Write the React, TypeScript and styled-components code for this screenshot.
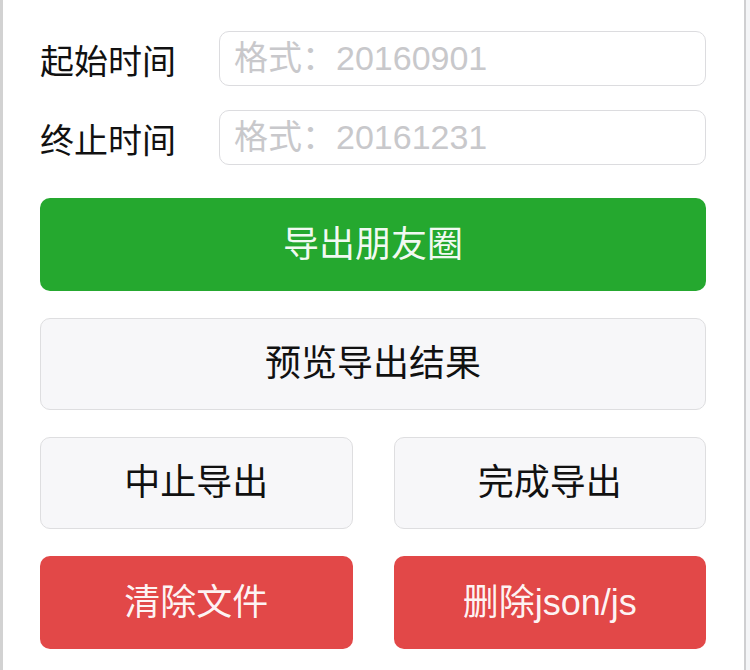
import React from "react";
import styled, { createGlobalStyle } from "styled-components";

const Global = createGlobalStyle`
  html, body { margin: 0; padding: 0; background: #f4f5f7; }
  * { box-sizing: border-box; }
  body { font-family: "Liberation Sans", "Noto Sans CJK SC", sans-serif; }
`;

const Page = styled.div`
  width: 750px;
  height: 670px;
  display: flex;
  background: #f4f5f7;
`;

const Frame = styled.div`
  width: 746px;
  height: 670px;
  background: #ffffff;
  border-left: 3px solid #d2d2d2;
  border-right: 2px solid #cfcfd1;
  padding: 31px 38px 0 37px;
  display: flex;
  flex-direction: column;
`;

const Field = styled.div<{ $last?: boolean }>`
  display: flex;
  align-items: center;
  height: 55px;
  margin-bottom: ${(p) => (p.$last ? 0 : 24)}px;
`;

const Label = styled.div`
  width: 179px;
  flex-shrink: 0;
  font-family: "Noto Sans CJK SC", sans-serif;
  font-size: 34px;
  color: #111;
  line-height: 1;
  padding-top: 2px;
`;

const Input = styled.input`
  flex: 1;
  height: 55px;
  border: 1.5px solid #dcdcdf;
  border-radius: 10px;
  padding: 0 14px;
  font-family: "Liberation Sans", "Noto Sans CJK SC", sans-serif;
  font-size: 34px;
  color: #333;
  outline: none;
  background: #fff;
  &::placeholder { color: #c8c8cb; }
`;

type Variant = "primary" | "default" | "warn";

const Button = styled.div<{ $variant: Variant; $h?: number }>`
  height: ${(p) => p.$h ?? 93}px;
  flex: 1;
  border-radius: 10px;
  display: flex;
  align-items: center;
  justify-content: center;
  font-family: "Liberation Sans", "Noto Sans CJK SC", sans-serif;
  font-size: 36px;
  line-height: 1;
  background: ${(p) =>
    p.$variant === "primary" ? "#25a82f" : p.$variant === "warn" ? "#e24848" : "#f7f7f9"};
  color: ${(p) => (p.$variant === "default" ? "#111" : "rgba(255,255,255,0.95)")};
  border: ${(p) => (p.$variant === "default" ? "1.5px solid #dedee0" : "none")};
`;

const Row = styled.div<{ $top: number; $h: number }>`
  display: flex;
  gap: 41px;
  height: ${(p) => p.$h}px;
  margin-top: ${(p) => p.$top}px;
`;

export default function App() {
  return (
    <>
      <Global />
      <Page>
        <Frame>
          <Field>
            <Label>起始时间</Label>
            <Input placeholder="格式：20160901" />
          </Field>
          <Field $last>
            <Label>终止时间</Label>
            <Input placeholder="格式：20161231" />
          </Field>
          <Row $top={33} $h={93}>
            <Button $variant="primary">导出朋友圈</Button>
          </Row>
          <Row $top={27} $h={92}>
            <Button $variant="default" $h={92}>预览导出结果</Button>
          </Row>
          <Row $top={27} $h={92}>
            <Button $variant="default" $h={92}>中止导出</Button>
            <Button $variant="default" $h={92}>完成导出</Button>
          </Row>
          <Row $top={27} $h={93}>
            <Button $variant="warn">清除文件</Button>
            <Button $variant="warn">删除json/js</Button>
          </Row>
        </Frame>
      </Page>
    </>
  );
}
